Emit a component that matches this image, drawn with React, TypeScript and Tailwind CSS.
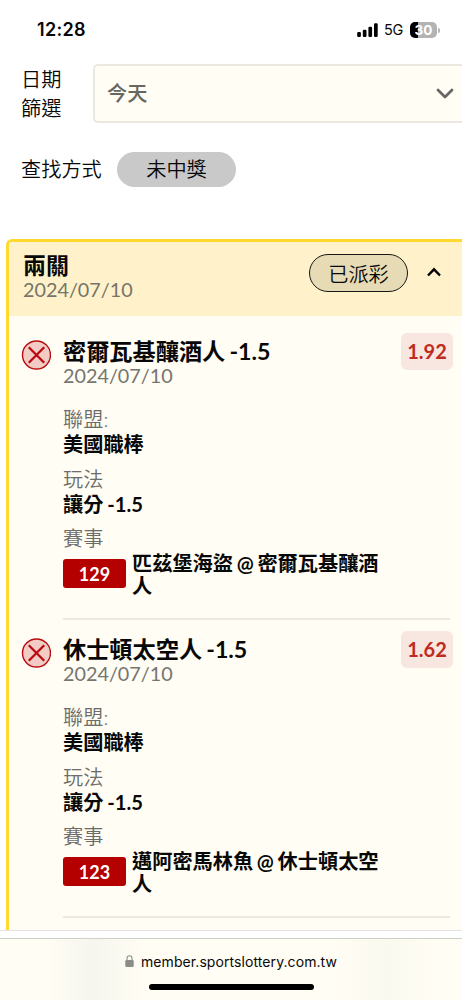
import React from "react";

type Leg = { title: string; odds: string; code: string; away: string; home: string; rest: string };

const legs: Leg[] = [
  { title: "密爾瓦基釀酒人 -1.5", odds: "1.92", code: "129", away: "匹茲堡海盜", home: "密爾瓦基釀酒", rest: "人" },
  { title: "休士頓太空人 -1.5", odds: "1.62", code: "123", away: "邁阿密馬林魚", home: "休士頓太空", rest: "人" },
];

function StatusBar() {
  return (
    <div className="flex h-[60px] shrink-0 items-start justify-between pt-[18px] pr-[22px] pl-[37px] font-['Inter',sans-serif]">
      <span className="text-[18px] leading-6 font-semibold tracking-[0.3px]">12:28</span>
      <div className="flex h-6 items-center">
        <svg width="21" height="14" viewBox="0 0 21 14" className="mr-[6px]">
          <rect x="0.2" y="9" width="3.7" height="5" rx="1.2" />
          <rect x="5.8" y="6.8" width="3.7" height="7.2" rx="1.2" />
          <rect x="11.4" y="3.8" width="3.7" height="10.2" rx="1.2" />
          <rect x="17" y="0.2" width="3.7" height="13.8" rx="1.2" />
        </svg>
        <span className="mr-[6px] w-5 text-[14.5px] tracking-[-0.2px]">5G</span>
        <div className="flex h-4 w-[27px] items-center justify-center rounded-[5px] bg-[linear-gradient(90deg,#000_30%,#b3b3b3_30%)] text-[13.5px] leading-4 font-bold text-white">
          30
        </div>
        <div className="ml-[1px] h-[5px] w-[2px] rounded-r bg-[#b3b3b3]" />
      </div>
    </div>
  );
}

function LostIcon() {
  return (
    <svg width="30" height="30" viewBox="0 0 30 30" fill="none" stroke="#b90b0f">
      <circle cx="15.5" cy="15" r="14" fill="#f2cbc5" strokeWidth="1.4" />
      <path d="M7.8 7.3 23.2 22.7M23.2 7.3 7.8 22.7" strokeWidth="2.3" />
    </svg>
  );
}

function LegItem({ leg }: { leg: Leg }) {
  return (
    <div className="flex h-[298px] shrink-0 pl-[12px]">
      <div className="w-[42px] shrink-0 pt-[18px]">
        <LostIcon />
      </div>
      <div className="flex h-[298px] w-[387px] shrink-0 flex-col border-b-2 border-[#ece8e3] pt-[18px]">
        <div className="flex h-[47px] justify-between">
          <div className="whitespace-nowrap">
            <div className="text-[23.2px] leading-[23px] font-bold [word-spacing:-1.5px]">{leg.title}</div>
            <div className="text-[19.8px] leading-6 text-[#757570]">2024/07/10</div>
          </div>
          <div className="-mt-[7px] -mr-[3px] h-[37px] w-[52px] shrink-0 rounded-[6px] bg-[#f8e7e0] text-center text-[20px] leading-[37px] font-bold text-[#c02b21]">
            {leg.odds}
          </div>
        </div>
        <div className="mt-5 leading-[25px] font-[350] text-[#6c6c68]">聯盟:</div>
        <div className="leading-[25px] font-bold">美國職棒</div>
        <div className="mt-[10px] leading-[25px] font-[350] text-[#6c6c68]">玩法</div>
        <div className="leading-[24px] font-bold [word-spacing:-1px]">讓分 -1.5</div>
        <div className="mt-[10px] leading-[25px] font-[350] text-[#6c6c68]">賽事</div>
        <div className="mt-px flex">
          <div className="mt-[7px] mr-[6px] h-[29px] w-[63px] rounded-[3px] bg-[#b50000] text-center text-[18px] leading-[30px] font-bold text-white">
            {leg.code}
          </div>
          <div className="leading-[22px] font-bold whitespace-nowrap [word-spacing:-1.2px]">
            {leg.away} <span className="text-[20.2px]">@</span> {leg.home}
            <br />
            {leg.rest}
          </div>
        </div>
      </div>
    </div>
  );
}

export default function App() {
  return (
    <div className="flex h-[1000px] w-[462px] flex-col overflow-hidden bg-white font-['Lato','Noto_Sans_CJK_TC',sans-serif] text-[20.2px] text-[#080808]">
      <StatusBar />
      <main className="flex h-[870px] shrink-0 flex-col overflow-hidden">
        <div className="flex shrink-0 pt-[4px] pl-[21px]">
          <div className="w-[72px] pt-px leading-[29px] font-[350]">
            日期
            <br />
            篩選
          </div>
          <div className="flex h-[59px] flex-1 items-center justify-between rounded-l-[5px] border-2 border-r-0 border-[#ece8e1] bg-[#fffdf4] pr-[8px] pl-[12px] font-medium text-[#666662]">
            <span>今天</span>
            <svg width="18" height="11" viewBox="0 0 18 11" fill="none" stroke="#666" strokeWidth="2.8" strokeLinecap="round" strokeLinejoin="round">
              <path d="m2 2 7 7 7-7" />
            </svg>
          </div>
        </div>
        <div className="mt-[28px] flex h-[36px] shrink-0 items-center pl-[21px] font-[350]">
          <span className="w-[96px]">查找方式</span>
          <div className="h-[35px] w-[119px] rounded-full bg-[#c9c9c9] text-center leading-[35px]">未中獎</div>
        </div>
        <section className="mt-[52px] ml-[6px] flex h-[760px] shrink-0 flex-col rounded-tl-[6px] border-t-[3px] border-l-[3px] border-[#ffd92e] bg-[#fffdf4]">
          <header className="flex h-[74px] shrink-0 rounded-tl-[3px] bg-[#fff2cb] pt-[12px] pl-[14px]">
            <div className="w-[286px]">
              <div className="text-[23px] leading-[23px] font-bold">兩關</div>
              <div className="text-[19.8px] leading-6 text-[#757568]">2024/07/10</div>
            </div>
            <div className="h-[38px] w-[99px] rounded-full border-[1.5px] border-[#171717] bg-[#e6dbb5] text-center leading-[39px] font-[350]">
              已派彩
            </div>
            <svg className="mt-[13px] ml-[19px]" width="14" height="10" viewBox="0 0 14 10" fill="none" stroke="#000" strokeWidth="2.4">
              <path d="m1 8.5 6-6.2 6 6.2" />
            </svg>
          </header>
          <div className="h-[6px] shrink-0" />
          {legs.map((leg) => (
            <LegItem key={leg.code} leg={leg} />
          ))}
        </section>
      </main>
      <div className="h-[9px] shrink-0 border-t border-b border-t-[#e2e2e2] border-b-[#cfcfca] bg-white" />
      <footer className="flex h-[61px] shrink-0 flex-col items-center bg-[linear-gradient(90deg,#fffdf4_8%,#fffdf4_10%,#f7f6ee_20%,#fffdf4_32%,#fffdf4_72%,#faf9f0_84%,#fffdf4_94%)]">
        <div className="mt-[10px] flex h-[24px] items-center gap-[7px] font-['Inter',sans-serif] text-[14px] tracking-[0.08px]">
          <svg width="9" height="12" viewBox="0 0 9 12" fill="none">
            <rect x="0.3" y="5" width="8.4" height="7" rx="1.2" fill="#8b8b88" />
            <path d="M2 5.5V3.2a2.5 2.5 0 0 1 5 0v2.3" stroke="#8b8b88" strokeWidth="1.1" />
          </svg>
          <span>member.sportslottery.com.tw</span>
        </div>
        <div className="mt-[11px] h-[6px] w-[165px] rounded-full bg-black" />
      </footer>
    </div>
  );
}
